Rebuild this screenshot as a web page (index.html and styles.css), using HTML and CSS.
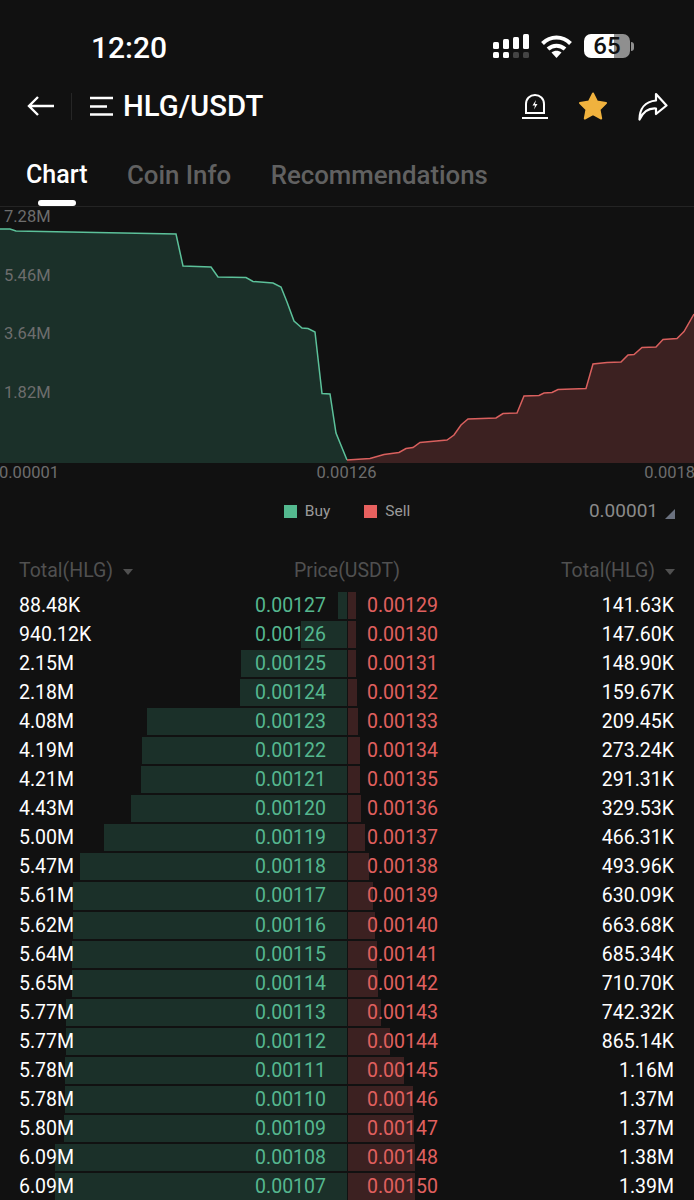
FILE: index.html
```html
<!DOCTYPE html>
<html lang="en">
<head>
  <meta charset="UTF-8" />
  <meta name="viewport" content="width=device-width, initial-scale=1.0">
  <title>HLG/USDT</title>
  <link rel="stylesheet" href="styles.css">
</head>
<body>
  <div class="status-bar">
    <div class="clock">12:20</div>
    <div class="status-icons">
      <svg class="signal" width="36" height="24" viewBox="0 0 36 24">
        <rect x="0" y="8" width="6" height="7" rx="1.5" fill="#fff"/>
        <rect x="10" y="5" width="6" height="10" rx="1.5" fill="#fff"/>
        <rect x="20" y="3" width="6" height="12" rx="1.5" fill="#fff"/>
        <rect x="30" y="0" width="6" height="15" rx="1.5" fill="#fff"/>
        <rect x="0" y="18" width="6" height="6" rx="1.5" fill="#fff"/>
        <rect x="10" y="18" width="6" height="6" rx="1.5" fill="#fff"/>
        <rect x="20" y="18" width="6" height="6" rx="1.5" fill="#444"/>
        <rect x="30" y="18" width="6" height="6" rx="1.5" fill="#444"/>
      </svg>
      <svg class="wifi" width="31" height="23" viewBox="0 0 31 23">
        <path d="M1.5 8.5C9.5 0.5 21.5 0.5 29.5 8.5" fill="none" stroke="#fff" stroke-width="4"/>
        <path d="M7 14C12 9.5 19 9.5 24 14" fill="none" stroke="#fff" stroke-width="4"/>
        <path d="M10.5 17.5C13.5 15 17.5 15 20.5 17.5L15.5 23Z" fill="#fff"/>
      </svg>
      <div class="battery">65</div>
      <div class="battery-nub"></div>
    </div>
  </div>

  <div class="nav">
    <div class="nav-left">
      <svg class="back" width="28" height="22" viewBox="0 0 28 22">
        <path d="M27 11H2M11 2L2 11L11 20" fill="none" stroke="#fff" stroke-width="2.4"/>
      </svg>
      <div class="nav-divider"></div>
      <svg class="menu" width="23" height="20" viewBox="0 0 23 20">
        <path d="M0 2H23M0 10.500H17M0 18.500H23" fill="none" stroke="#fff" stroke-width="2.600"/>
      </svg>
      <div class="pair">HLG/USDT</div>
    </div>
    <div class="nav-right">
      <svg width="26" height="26" viewBox="0 0 26 26">
        <path d="M4 20V11C4 5.500 8 2 13 2C18 2 22 5.500 22 11V20Z" fill="none" stroke="#fff" stroke-width="2"/>
        <path d="M14 7L10.500 12.500H13L12 16.500L15.500 11H13Z" fill="#fff"/>
        <path d="M0 25H26" stroke="#fff" stroke-width="2"/>
      </svg>
      <svg width="30" height="28" viewBox="0 0 30 28">
        <path d="M15 1.500L19 9.500L28 11L21.500 17.500L23.200 26.500L15 22.200L6.800 26.500L8.500 17.500L2 11L11 9.500Z" fill="#f0b23e" stroke="#f0b23e" stroke-width="2" stroke-linejoin="round"/>
      </svg>
      <svg width="30" height="29" viewBox="0 0 30 29">
        <path d="M18 2L28.500 13.500L18 22V16.500C11 16 5.500 19 1.500 27.500C1.500 17 7 9.500 18 8.500Z" fill="none" stroke="#fff" stroke-width="2.200" stroke-linejoin="round"/>
      </svg>
    </div>
  </div>

  <div class="tabs">
    <div class="tab active">Chart</div>
    <div class="tab">Coin Info</div>
    <div class="tab">Recommendations</div>
  </div>

  <div class="chart">
    <svg width="694" height="256" viewBox="0 207 694 256">
      <path class="buy-area" d="M0 229H10L16 231L176 234L183 266L211 267L218 277L246 277.500L253 281.500L273 283L281 287L287 302L294 321L302 328L308 328.500L315 332L322 393.500L330 394L336 433L347 460V463H0Z"/>
      <path class="buy-line" d="M0 229H10L16 231L176 234L183 266L211 267L218 277L246 277.500L253 281.500L273 283L281 287L287 302L294 321L302 328L308 328.500L315 332L322 393.500L330 394L336 433L347 460"/>
      <path class="sell-area" d="M347 460L370 458.500L384 454.500L399 452.500L406 448.500L413 447.500L420 442.500L447 440L454 435L461 425L468 419L496 418L503 413.500L517 413L524 396L539 395.500L544 393L552 392.500L558 389.500L586 388.500L593 364L607 362.500L621 362L628 355L634 354.500L642 347.500L656 347L663 339.500L677 338.500L684 331.500L694 314V463H347Z"/>
      <path class="sell-line" d="M347 460L370 458.500L384 454.500L399 452.500L406 448.500L413 447.500L420 442.500L447 440L454 435L461 425L468 419L496 418L503 413.500L517 413L524 396L539 395.500L544 393L552 392.500L558 389.500L586 388.500L593 364L607 362.500L621 362L628 355L634 354.500L642 347.500L656 347L663 339.500L677 338.500L684 331.500L694 314"/>
    </svg>
    <div class="y-labels">
      <div>7.28M</div>
      <div>5.46M</div>
      <div>3.64M</div>
      <div>1.82M</div>
    </div>
  </div>
  <div class="x-labels">
    <div>0.00001</div>
    <div>0.00126</div>
    <div class="x-last">0.0018</div>
  </div>

  <div class="legend">
    <div class="legend-items">
      <div class="legend-item"><span class="swatch swatch-buy"></span>Buy</div>
      <div class="legend-item"><span class="swatch swatch-sell"></span>Sell</div>
    </div>
    <div class="precision">0.00001<span class="corner"></span></div>
  </div>

  <div class="book-head">
    <div class="head-cell">Total(HLG)<span class="caret"></span></div>
    <div class="head-price">Price(USDT)</div>
    <div class="head-cell">Total(HLG)<span class="caret"></span></div>
  </div>

  <div class="book">
    <div class="row"><div class="side buy"><i class="bar" style="width:9px"></i><span class="total">88.48K</span><span class="price">0.00127</span></div><div class="side sell"><i class="bar" style="width:9px"></i><span class="price">0.00129</span><span class="total">141.63K</span></div></div>
    <div class="row"><div class="side buy"><i class="bar" style="width:46px"></i><span class="total">940.12K</span><span class="price">0.00126</span></div><div class="side sell"><i class="bar" style="width:9px"></i><span class="price">0.00130</span><span class="total">147.60K</span></div></div>
    <div class="row"><div class="side buy"><i class="bar" style="width:106px"></i><span class="total">2.15M</span><span class="price">0.00125</span></div><div class="side sell"><i class="bar" style="width:9px"></i><span class="price">0.00131</span><span class="total">148.90K</span></div></div>
    <div class="row"><div class="side buy"><i class="bar" style="width:107px"></i><span class="total">2.18M</span><span class="price">0.00124</span></div><div class="side sell"><i class="bar" style="width:10px"></i><span class="price">0.00132</span><span class="total">159.67K</span></div></div>
    <div class="row"><div class="side buy"><i class="bar" style="width:200px"></i><span class="total">4.08M</span><span class="price">0.00123</span></div><div class="side sell"><i class="bar" style="width:11px"></i><span class="price">0.00133</span><span class="total">209.45K</span></div></div>
    <div class="row"><div class="side buy"><i class="bar" style="width:205px"></i><span class="total">4.19M</span><span class="price">0.00122</span></div><div class="side sell"><i class="bar" style="width:13px"></i><span class="price">0.00134</span><span class="total">273.24K</span></div></div>
    <div class="row"><div class="side buy"><i class="bar" style="width:206px"></i><span class="total">4.21M</span><span class="price">0.00121</span></div><div class="side sell"><i class="bar" style="width:13px"></i><span class="price">0.00135</span><span class="total">291.31K</span></div></div>
    <div class="row"><div class="side buy"><i class="bar" style="width:216px"></i><span class="total">4.43M</span><span class="price">0.00120</span></div><div class="side sell"><i class="bar" style="width:14px"></i><span class="price">0.00136</span><span class="total">329.53K</span></div></div>
    <div class="row"><div class="side buy"><i class="bar" style="width:243px"></i><span class="total">5.00M</span><span class="price">0.00119</span></div><div class="side sell"><i class="bar" style="width:18px"></i><span class="price">0.00137</span><span class="total">466.31K</span></div></div>
    <div class="row"><div class="side buy"><i class="bar" style="width:267px"></i><span class="total">5.47M</span><span class="price">0.00118</span></div><div class="side sell"><i class="bar" style="width:22px"></i><span class="price">0.00138</span><span class="total">493.96K</span></div></div>
    <div class="row"><div class="side buy"><i class="bar" style="width:274px"></i><span class="total">5.61M</span><span class="price">0.00117</span></div><div class="side sell"><i class="bar" style="width:26px"></i><span class="price">0.00139</span><span class="total">630.09K</span></div></div>
    <div class="row"><div class="side buy"><i class="bar" style="width:274px"></i><span class="total">5.62M</span><span class="price">0.00116</span></div><div class="side sell"><i class="bar" style="width:28px"></i><span class="price">0.00140</span><span class="total">663.68K</span></div></div>
    <div class="row"><div class="side buy"><i class="bar" style="width:275px"></i><span class="total">5.64M</span><span class="price">0.00115</span></div><div class="side sell"><i class="bar" style="width:30px"></i><span class="price">0.00141</span><span class="total">685.34K</span></div></div>
    <div class="row"><div class="side buy"><i class="bar" style="width:275px"></i><span class="total">5.65M</span><span class="price">0.00114</span></div><div class="side sell"><i class="bar" style="width:31px"></i><span class="price">0.00142</span><span class="total">710.70K</span></div></div>
    <div class="row"><div class="side buy"><i class="bar" style="width:281px"></i><span class="total">5.77M</span><span class="price">0.00113</span></div><div class="side sell"><i class="bar" style="width:34px"></i><span class="price">0.00143</span><span class="total">742.32K</span></div></div>
    <div class="row"><div class="side buy"><i class="bar" style="width:281px"></i><span class="total">5.77M</span><span class="price">0.00112</span></div><div class="side sell"><i class="bar" style="width:43px"></i><span class="price">0.00144</span><span class="total">865.14K</span></div></div>
    <div class="row"><div class="side buy"><i class="bar" style="width:282px"></i><span class="total">5.78M</span><span class="price">0.00111</span></div><div class="side sell"><i class="bar" style="width:57px"></i><span class="price">0.00145</span><span class="total">1.16M</span></div></div>
    <div class="row"><div class="side buy"><i class="bar" style="width:282px"></i><span class="total">5.78M</span><span class="price">0.00110</span></div><div class="side sell"><i class="bar" style="width:66px"></i><span class="price">0.00146</span><span class="total">1.37M</span></div></div>
    <div class="row"><div class="side buy"><i class="bar" style="width:283px"></i><span class="total">5.80M</span><span class="price">0.00109</span></div><div class="side sell"><i class="bar" style="width:67px"></i><span class="price">0.00147</span><span class="total">1.37M</span></div></div>
    <div class="row"><div class="side buy"><i class="bar" style="width:292px"></i><span class="total">6.09M</span><span class="price">0.00108</span></div><div class="side sell"><i class="bar" style="width:68px"></i><span class="price">0.00148</span><span class="total">1.38M</span></div></div>
    <div class="row"><div class="side buy"><i class="bar" style="width:292px"></i><span class="total">6.09M</span><span class="price">0.00107</span></div><div class="side sell"><i class="bar" style="width:68px"></i><span class="price">0.00150</span><span class="total">1.39M</span></div></div>
  </div>
</body>
</html>
```
FILE: styles.css
```css
html, body {
  margin: 0;
  height: 1200px;
  overflow: hidden;
}

body {
  background: #111111;
  color: #fff;
  font-family: Roboto, "Liberation Sans", sans-serif;
}

/* status bar */
.status-bar {
  height: 84px;
  display: flex;
  justify-content: space-between;
  box-sizing: border-box;
  padding: 30px 60px 0 91px;
}

.clock {
  font-size: 30px;
  font-weight: 500;
  line-height: 35px;
}

.status-icons {
  display: flex;
  align-items: flex-start;
  padding-top: 4px;
}

.signal {
  margin-right: 12px;
}

.wifi {
  margin-right: 12px;
  margin-top: 1px;
}

.battery {
  width: 46px;
  height: 24px;
  border-radius: 7px;
  background: linear-gradient(90deg, #fff 65%, #8f8f8f 65%);
  color: #111;
  font-size: 24px;
  font-weight: 500;
  line-height: 24px;
  text-align: center;
}

.battery-nub {
  width: 3px;
  height: 9px;
  margin: 8px 0 0 1px;
  border-radius: 0 3px 3px 0;
  background: #8f8f8f;
}

/* nav */
.nav {
  height: 44px;
  display: flex;
  justify-content: space-between;
  align-items: center;
  padding: 0 26px 0 27px;
}

.nav-left {
  display: flex;
  align-items: center;
}

.nav-divider {
  width: 1px;
  height: 27px;
  margin: 0 18px 0 16px;
  background: #262626;
}

.pair {
  margin-left: 10px;
  font-size: 29.300px;
  font-weight: 500;
}

.nav-right {
  display: flex;
  align-items: center;
  gap: 30px;
}

/* tabs */
.tabs {
  height: 79px;
  box-sizing: border-box;
  display: flex;
  align-items: flex-start;
  gap: 39.500px;
  padding: 31px 0 0 26px;
  border-bottom: 1px solid #242424;
}

.tab {
  position: relative;
  color: #616161;
  font-size: 25.800px;
  font-weight: 500;
  line-height: 32px;
}

.tab.active {
  color: #fff;
  font-size: 25px;
}

.tab.active::after {
  content: "";
  position: absolute;
  left: 12px;
  bottom: -15px;
  width: 38px;
  height: 6px;
  border-radius: 3px;
  background: #fff;
}

/* depth chart */
.chart {
  position: relative;
  height: 256px;
}

.chart svg {
  display: block;
}

.buy-area {
  fill: #1b3029;
}

.buy-line {
  fill: none;
  stroke: #5cc19a;
  stroke-width: 1.500;
}

.sell-area {
  fill: #3c2121;
}

.sell-line {
  fill: none;
  stroke: #d9605e;
  stroke-width: 1.500;
}

.y-labels {
  position: absolute;
  left: 4px;
  top: 0;
  display: flex;
  flex-direction: column;
  gap: 38.500px;
  color: #6d6d6d;
  font-size: 16.500px;
  line-height: 20px;
}

.x-labels {
  height: 20px;
  display: grid;
  grid-template-columns: 1fr auto 1fr;
  margin-left: -1px;
  color: #6d6d6d;
  font-size: 16.500px;
  line-height: 19px;
}

.x-last {
  margin-right: -1px;
  text-align: right;
}

/* legend */
.legend {
  position: relative;
  height: 72px;
  box-sizing: border-box;
  padding-top: 18px;
}

.legend-items {
  display: flex;
  justify-content: center;
  gap: 34px;
}

.legend-item {
  display: flex;
  align-items: center;
  color: #9a9a9a;
  font-size: 15.500px;
  line-height: 20px;
}

.swatch {
  width: 13px;
  height: 13px;
  margin-right: 8px;
}

.swatch-buy {
  background: #54b98f;
}

.swatch-sell {
  background: #e8615f;
}

.precision {
  position: absolute;
  right: 19px;
  top: 16px;
  display: flex;
  align-items: flex-end;
  color: #8a8a8a;
  font-size: 19px;
  line-height: 24px;
}

.corner {
  width: 0;
  height: 0;
  margin: 0 0 4px 7px;
  border-left: 10px solid transparent;
  border-bottom: 10px solid #6b7280;
}

/* order book */
.book-head {
  height: 30px;
  display: flex;
  justify-content: space-between;
  align-items: center;
  padding: 0 19px;
  color: #505050;
  font-size: 19.500px;
}

.head-cell {
  display: flex;
  align-items: center;
}

.caret {
  width: 0;
  height: 0;
  margin: 3px 0 0 10px;
  border-left: 5px solid transparent;
  border-right: 5px solid transparent;
  border-top: 6px solid #505050;
}

.book {
  margin-top: 6px;
}

.row {
  height: 29.050px;
  display: flex;
  font-size: 19.500px;
  line-height: 29px;
}

.side {
  position: relative;
  width: 347px;
  box-sizing: border-box;
  display: flex;
  justify-content: space-between;
}

.buy {
  padding: 0 21px 0 19px;
}

.sell {
  padding: 0 20px;
}

.bar {
  position: absolute;
  top: 1px;
  bottom: 1px;
}

.buy .bar {
  right: 0;
  background: #1b3029;
}

.sell .bar {
  left: 0;
  box-sizing: border-box;
  border-left: 1px solid #111111;
  background: #3c2121;
}

.total,
.price {
  position: relative;
}

.buy .price {
  color: #55b78f;
}

.sell .price {
  color: #e0605f;
}
```
